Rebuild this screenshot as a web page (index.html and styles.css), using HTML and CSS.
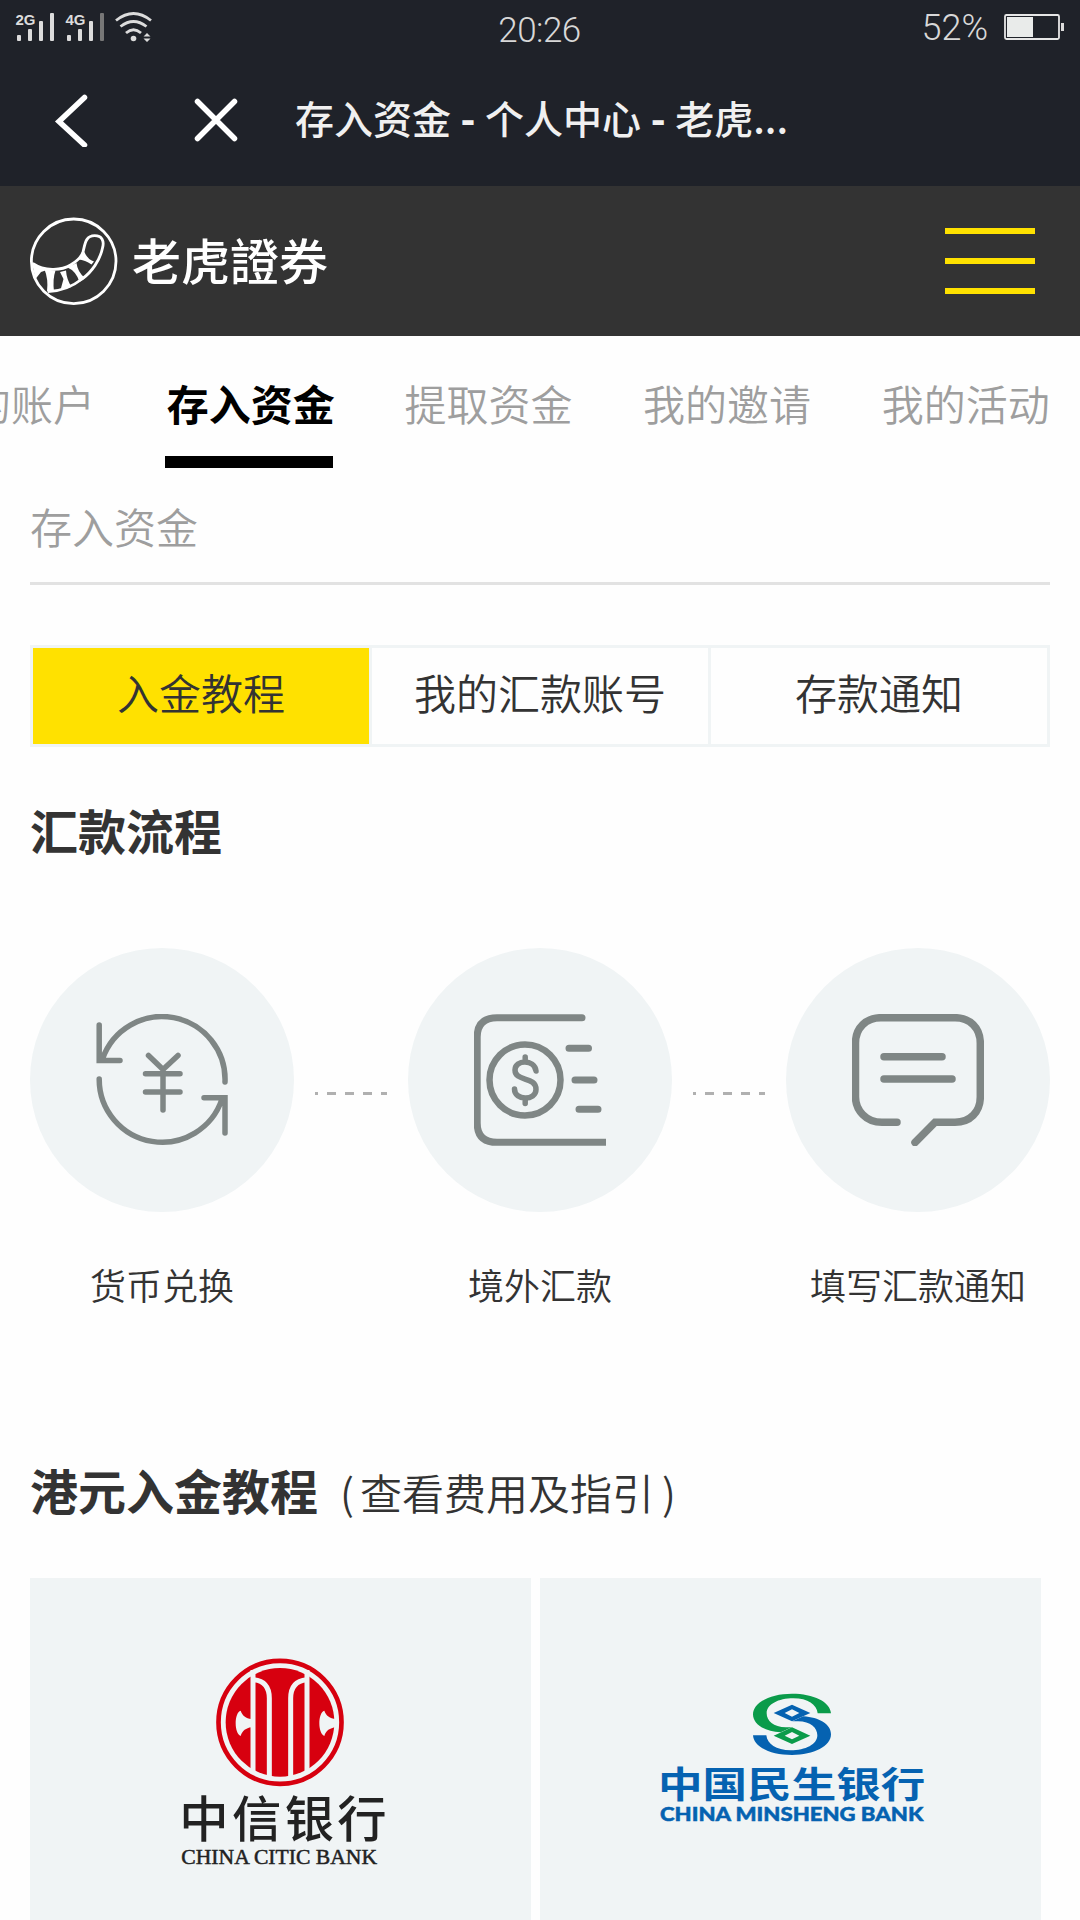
FILE: index.html
```html
<!DOCTYPE html>
<html lang="zh">
<head>
  <meta charset="UTF-8" />
  <title>存入资金 - 个人中心 - 老虎证券</title>
  <link rel="stylesheet" href="styles.css">
</head>
<body>
  <div class="app-top">
    <div class="status-bar">
      <svg class="signals" width="140" height="34" viewBox="14 10 140 34">
        <g class="signal-text">
          <text x="15.5" y="24.5" textLength="20" lengthAdjust="spacingAndGlyphs">2G</text>
          <text x="65.5" y="24.5" textLength="20" lengthAdjust="spacingAndGlyphs">4G</text>
        </g>
        <g fill="#dcdcdc">
          <rect x="17" y="35" width="4" height="6" rx="1" />
          <rect x="28" y="29" width="4" height="12" rx="1" />
          <rect x="39" y="21" width="4" height="20" rx="1" />
          <rect x="50" y="13" width="4" height="28" rx="1" />
          <rect x="67" y="35" width="4" height="6" rx="1" />
          <rect x="78" y="29" width="4" height="12" rx="1" />
          <rect x="89" y="21" width="4" height="20" rx="1" />
          <circle cx="133.5" cy="38.5" r="2.8" />
          <path d="M143.5 36.5l3.5-3.5 3.5 3.5zM143.5 38.5h7l-3.5 3.5z" />
        </g>
        <rect x="100" y="13" width="4" height="28" rx="1" fill="#777" />
        <path d="M116 20.5Q133.5 6.5 151 20.5M120.5 26.5Q133.5 16.5 146.5 26.5M126 33Q133.5 26.5 141 33" fill="none" stroke="#dcdcdc" stroke-width="2.8" />
      </svg>
      <span class="clock">20:26</span>
      <div class="battery">
        <span>52%</span>
        <svg width="62" height="28" viewBox="1003 13 62 28">
          <rect x="1005" y="15" width="54" height="24" rx="1.5" fill="none" stroke="#e6e6e6" stroke-width="1.8" />
          <rect x="1007" y="17" width="26" height="20" fill="#e9ebea" />
          <rect x="1061" y="23" width="3" height="8" fill="#dcdcdc" />
        </svg>
      </div>
    </div>
    <div class="nav-bar">
      <svg class="back" width="34" height="54" viewBox="0 0 34 54">
        <path d="M30.5 4.5L5 28.5 30.5 52" />
      </svg>
      <svg class="close" width="44" height="44" viewBox="0 0 44 44">
        <path d="M3.5 3.5L40.5 40.5M40.5 3.5L3.5 40.5" />
      </svg>
      <span class="nav-title">存入资金 <b>-</b> 个人中心 <b>-</b> 老虎...</span>
    </div>
  </div>

  <div class="brand-bar">
    <div class="brand">
      <svg width="88" height="88" viewBox="0 0 88 88">
        <g fill="none" stroke="#fff" stroke-width="2.8">
          <circle cx="43.7" cy="44.3" r="42.3" />
          <path d="M2.7 46.3C14 54 31 54 40.6 48C49 43 52 38 53 35C55 28 55 18.7 64.7 18.7C72 18.7 74.5 24 72.5 31C70 43 62 55 52 62C42 70 32 74 18 74.7" />
        </g>
        <g fill="#fff">
          <path d="M2 46L17 53 11 55 5.5 62z" />
          <path d="M14.5 52.5L25.5 53.5Q22.5 62 24 74.5H17Q18.5 62 14.5 52.5z" />
          <path d="M30 55L36 53.5Q36.5 62 41.5 70L30.5 73 33.5 62z" />
          <path d="M37.5 50.5L46.5 46Q47.5 55 55 61L49.5 65Q46 54 37.5 50.5z" />
          <path d="M48.5 42.5L54.5 35Q57 42 64 44.5L61.5 47.5Q55 43 48.5 42.5z" />
        </g>
      </svg>
      <span class="brand-name">老虎證券</span>
    </div>
    <div class="menu">
      <i></i>
      <i></i>
      <i></i>
    </div>
  </div>

  <div class="tabs">
    <span class="tab">我的账户</span>
    <span class="tab active">存入资金</span>
    <span class="tab">提取资金</span>
    <span class="tab">我的邀请</span>
    <span class="tab">我的活动</span>
  </div>

  <div class="content">
    <div class="page-title">存入资金</div>
    <div class="segments">
      <div class="segment active">入金教程</div>
      <div class="segment">我的汇款账号</div>
      <div class="segment">存款通知</div>
    </div>

    <h2 class="flow-title">汇款流程</h2>
    <div class="flow">
      <div class="step">
        <div class="step-icon">
          <svg width="132" height="132" viewBox="0 0 132 132" stroke-width="5.5">
            <path d="M129 68A63 63 0 0 0 6.5 45M3.2 11V46.5H24M3.2 65A63 63 0 0 0 126 85M108 83.7H129V119" />
            <path d="M52.5 41.5L67 55.5 82 41.5M67 55.5V96M49.5 59.7H84M49.5 78H84" />
          </svg>
        </div>
        <span>货币兑换</span>
      </div>
      <svg class="dots" width="72" height="3" viewBox="0 0 72 3">
        <path d="M0 1.5H72" stroke-dasharray="9 9" stroke-dashoffset="6" />
      </svg>
      <div class="step">
        <div class="step-icon">
          <svg width="132" height="132" viewBox="0 0 132 132" stroke-width="7">
            <path d="M108 3.7H23Q3.2 3.7 3.2 23V109Q3.2 128.3 23 128.3H135" />
            <circle cx="51" cy="66" r="35.5" stroke-width="6.5" />
            <path d="M62 57C60.5 45 41 45.5 41 56C41 68 62 62 62 75.5C62 87 40.5 87 40.5 75M51.2 43V48M51.2 84V89.5" stroke-width="5.5" />
            <path d="M95 34.3H114.5M101 66H120M105 95.3H124" />
          </svg>
        </div>
        <span>境外汇款</span>
      </div>
      <svg class="dots" width="72" height="3" viewBox="0 0 72 3">
        <path d="M0 1.5H72" stroke-dasharray="9 9" stroke-dashoffset="6" />
      </svg>
      <div class="step">
        <div class="step-icon">
          <svg width="132" height="132" viewBox="0 0 132 132" stroke-width="7.5">
            <path d="M45 108.3H30C14 108.3 3.5 96 3.5 83V29C3.5 14 14 3.7 29 3.7H103C118 3.7 128.3 14 128.3 29V83C128.3 98 118 108.3 103 108.3H83L63 128.5" />
            <path d="M32 42.7H90M32 65H100" />
          </svg>
        </div>
        <span>填写汇款通知</span>
      </div>
    </div>

    <h2 class="guide-title">港元入金教程<small><i class="open">(</i>查看费用及指引<i>)</i></small></h2>
    <div class="banks">
      <div class="bank citic">
        <svg width="221" height="240" viewBox="0 0 663 720">
          <circle cx="330" cy="247" r="184.5" fill="none" stroke="#d7000f" stroke-width="14" />
          <circle cx="330" cy="247" r="163" fill="#d7000f" />
          <g fill="none" stroke="#f0f4f5" stroke-width="15">
            <path d="M249 90V400M411 90V400" />
            <path d="M250 119C283 122 298 143 298 175V418M410 119C377 122 362 143 362 175V418" />
          </g>
          <g fill="#f0f4f5">
            <path d="M244 237C228 235 217 227 212 212C202 215 197 232 197 250C197 268 202 284 212 288C217 272 228 264 244 262z" />
            <path d="M498 237C479 235 468 227 463 212C453 215 448 232 448 250C448 268 453 284 463 288C468 272 479 264 498 262z" />
          </g>
          <text class="citic-cn" x="28" y="592" textLength="622">中信银行</text>
          <text class="citic-en" x="34" y="671" textLength="587" lengthAdjust="spacingAndGlyphs">CHINA CITIC BANK</text>
        </svg>
      </div>
      <div class="bank minsheng">
        <svg width="281" height="160" viewBox="0 0 843 480">
          <g fill="#0a9b4a">
            <path d="M543 100C541 65 490 41 426 41C360 41 309 68 309 103C309 134 345 154 392 157L425 142H408C370 142 350 122 350 100C350 73 385 55 430 55C474 55 500 74 503 100z" />
            <path fill-rule="evenodd" d="M371 167L426 142 481 167 426 192zM404 167L426 178 448 167 426 156z" />
          </g>
          <g fill="#0562b1" transform="rotate(180 426 133)">
            <path d="M543 100C541 65 490 41 426 41C360 41 309 68 309 103C309 134 345 154 392 157L425 142H408C370 142 350 122 350 100C350 73 385 55 430 55C474 55 500 74 503 100z" />
            <path fill-rule="evenodd" d="M371 167L426 142 481 167 426 192zM404 167L426 178 448 167 426 156z" />
          </g>
          <text class="minsheng-cn" x="24" y="353" textLength="802" lengthAdjust="spacingAndGlyphs">中国民生银行</text>
          <text class="minsheng-en" x="30" y="423" textLength="790" lengthAdjust="spacingAndGlyphs">CHINA MINSHENG BANK</text>
        </svg>
      </div>
    </div>
  </div>
</body>
</html>
```
FILE: styles.css
```css
* {
  box-sizing: border-box;
}

body {
  margin: 0;
  height: 1920px;
  overflow: hidden;
  background-color: #fefefe;
  color: #333;
  font-family: "Noto Sans CJK SC", sans-serif;
  font-weight: 350;
}

svg {
  display: block;
  flex: none;
}

.app-top {
  height: 186px;
  background-color: #1f2229;
  color: #f0f0f0;
}

.status-bar {
  display: grid;
  grid-template-columns: 1fr auto 1fr;
  height: 54px;
  padding: 10px 15px 0 14px;
  font-family: Roboto, sans-serif;
  font-size: 35px;
  font-weight: 300;
  line-height: 41px;
  color: #d8d8d8;
}

.signal-text {
  font-family: "Liberation Sans", sans-serif;
  font-size: 15px;
  font-weight: bold;
  fill: #dcdcdc;
}

.clock {
  letter-spacing: -0.5px;
}

.battery {
  display: flex;
  justify-content: flex-end;
  gap: 15px;
  font-size: 36px;
  line-height: 36px;
}

.battery svg {
  margin-top: 3px;
}

.nav-bar {
  display: flex;
  align-items: center;
  height: 132px;
}

.nav-bar path {
  fill: none;
  stroke: #fff;
  stroke-width: 5.5;
  stroke-linecap: round;
}

.back {
  margin-left: 54px;
}

.close {
  margin-left: 106px;
}

.nav-title {
  margin-left: 57px;
  padding-bottom: 6px;
  font-size: 39px;
  font-weight: 500;
  word-spacing: 0.8px;
}

.nav-title b {
  font-weight: 900;
}

.brand-bar {
  display: flex;
  align-items: center;
  justify-content: space-between;
  height: 150px;
  padding: 0 45px 0 30px;
  background-color: #333;
}

.brand {
  display: flex;
  align-items: center;
  gap: 14px;
}

.brand-name {
  padding-bottom: 5px;
  font-family: "Noto Sans CJK TC", sans-serif;
  font-size: 49px;
  font-weight: 500;
  line-height: 60px;
  color: #fff;
}

.menu {
  display: flex;
  flex-direction: column;
  gap: 24px;
  width: 90px;
}

.menu i {
  height: 6px;
  background-color: #ffe100;
}

.tabs {
  display: flex;
  gap: 70.7px;
  height: 132px;
  margin-left: -74px;
}

.tab {
  flex: none;
  width: 168px;
  padding-top: 34px;
  font-size: 42px;
  line-height: 66px;
  text-indent: 1px;
  white-space: nowrap;
  color: #9e9e9e;
}

.tab.active {
  border-bottom: 12px solid #000;
  font-weight: bold;
  text-indent: 2px;
  color: #000;
}

.content {
  padding: 0 30px;
}

.page-title {
  height: 117px;
  padding-top: 26px;
  border-bottom: 3px solid #e2e2e2;
  font-size: 42px;
  line-height: 64px;
  color: #9e9e9e;
}

.segments {
  display: flex;
  margin-top: 60px;
  height: 102px;
  border: 3px solid #f0f4f5;
}

.segment {
  flex: 1;
  font-size: 42px;
  line-height: 87px;
  text-align: center;
}

.segment + .segment {
  border-left: 3px solid #f0f4f5;
}

.segment.active {
  background-color: #ffe100;
}

h2 {
  margin: 0;
  font-size: 48px;
  line-height: 72px;
}

.flow-title {
  margin-top: 46px;
}

.flow {
  display: flex;
  justify-content: space-between;
  margin-top: 83px;
}

.step {
  display: flex;
  flex-direction: column;
  align-items: center;
  width: 264px;
  font-size: 36px;
  line-height: 54px;
}

.step-icon {
  display: flex;
  align-items: center;
  justify-content: center;
  width: 264px;
  height: 264px;
  margin-bottom: 45px;
  border-radius: 50%;
  background-color: #f0f4f5;
}

.step-icon svg {
  fill: none;
  stroke: #7f8685;
  stroke-linecap: round;
}

.dots {
  margin-top: 144px;
}

.dots path {
  stroke: #b0b0b0;
  stroke-width: 3;
}

.guide-title {
  margin-top: 142px;
}

.guide-title small {
  font-size: 42px;
  font-weight: 350;
}

.guide-title i {
  display: inline-block;
  width: 42px;
  padding-left: 8px;
  font-style: normal;
}

.guide-title .open {
  padding: 0 6px 0 0;
  text-align: right;
}

.banks {
  display: flex;
  gap: 9px;
  margin-top: 50px;
}

.bank {
  display: flex;
  justify-content: center;
  width: 501px;
  height: 342px;
  background-color: #f0f4f5;
}

.citic {
  padding-top: 62px;
}

.minsheng {
  padding-top: 102px;
}

.citic-cn {
  font-size: 148px;
  font-weight: 500;
  fill: #222;
}

.citic-en {
  font-family: "Liberation Serif", serif;
  font-size: 63px;
  font-weight: 400;
  fill: #222;
  stroke: #222;
  stroke-width: 1.5;
}

.minsheng-cn {
  font-size: 108px;
  font-weight: bold;
  fill: #0562b1;
}

.minsheng-en {
  font-family: Lato, sans-serif;
  font-size: 59px;
  font-weight: 900;
  fill: #0562b1;
  stroke: #0562b1;
  stroke-width: 1.5;
}
```
